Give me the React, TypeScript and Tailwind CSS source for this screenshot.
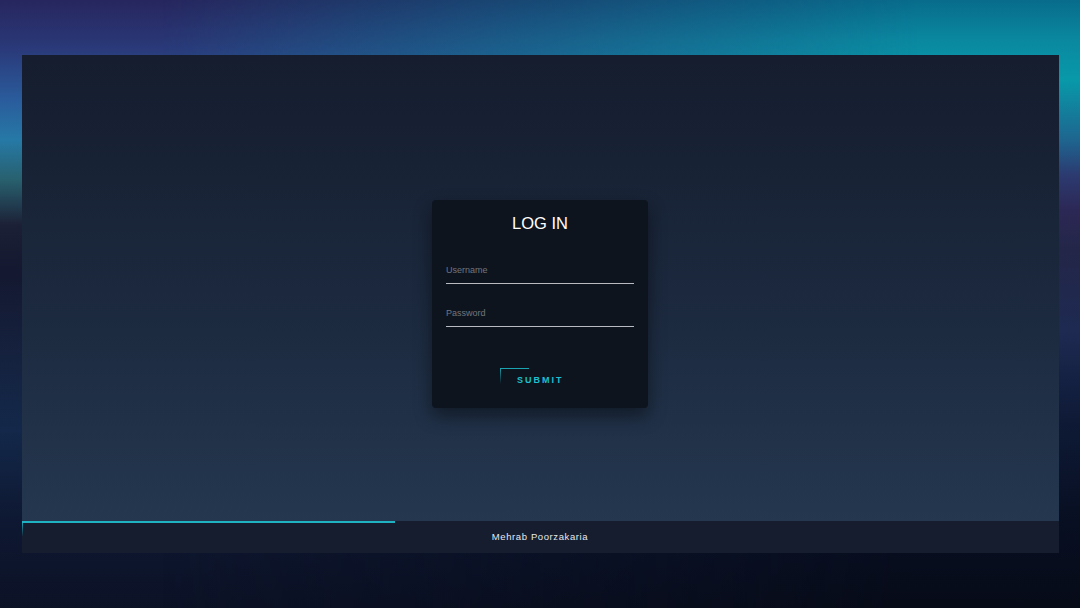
export default function App() {
  return (
    <div className="relative h-[608px] w-[1080px] overflow-hidden bg-[linear-gradient(180deg,#27265e_0px,#2a3a7a_50px,#2a5c9c_100px,#2679a6_140px,#28606e_180px,#1c2036_225px,#141830_270px,#15223f_360px,#13284a_430px,#0e1832_520px,#0c1226_608px)] font-['Liberation_Sans',Arial,sans-serif]">
      {/* right side colours, faded in from the left */}
      <div className="absolute inset-0 bg-[linear-gradient(180deg,#086c8c_0px,#0a88a0_40px,#0899a9_80px,#1e6590_140px,#2c3a70_175px,#2c2856_210px,#232648_250px,#1e2a52_330px,#0e1a36_420px,#080f22_520px,#070b18_608px)] [mask-image:linear-gradient(90deg,transparent_15%,black_85%)]" />

      <div className="relative flex h-full flex-col pb-[55px] pl-[22px] pr-[21px] pt-[55px]">
        <main className="flex flex-1 items-center justify-center bg-[linear-gradient(180deg,#151d2e,#1b283d_50%,#24374f)]">
          <div className="mr-px mt-[31px] flex h-[208px] w-[216px] flex-col items-center rounded-[4px] bg-[#0e141e] px-[14px] pt-[13px] shadow-[0_8px_18px_rgba(0,0,0,0.45)]">
            <h1 className="text-[16.5px] leading-[20px] text-white">LOG IN</h1>

            <div className="mt-[30px] w-full">
              <div className="h-[21px] border-b border-[#b8bcc2] text-[9px] leading-[14px] text-[#70767e]">
                Username
              </div>
              <div className="mt-[22px] h-[21px] border-b border-[#b8bcc2] text-[9px] leading-[14px] text-[#70767e]">
                Password
              </div>
            </div>

            <div className="relative ml-[54px] mt-[41px] flex h-[18px] items-end self-start">
              <span className="absolute left-0 top-0 h-[1.5px] w-[29px] bg-[#1aa3b0]" />
              <span className="absolute left-0 top-0 h-[16px] w-[1px] bg-[linear-gradient(180deg,#1aa3b0,transparent)]" />
              <span className="ml-[17px] text-[9px] font-bold leading-[12px] tracking-[2px] text-[#1cc0d0]">SUBMIT</span>
            </div>
          </div>
        </main>

        <footer className="relative flex h-[32px] items-center justify-center bg-[#151d2e]">
          <span className="absolute left-0 top-0 h-[1.5px] w-[373px] bg-[#1fb2c2]" />
          <span className="absolute left-0 top-0 h-[16px] w-[1px] bg-[linear-gradient(180deg,#1fb2c2,transparent)]" />
          <span className="mr-px text-[9.5px] tracking-[0.6px] text-[#e6e9ef]">Mehrab Poorzakaria</span>
        </footer>
      </div>
    </div>
  );
}
